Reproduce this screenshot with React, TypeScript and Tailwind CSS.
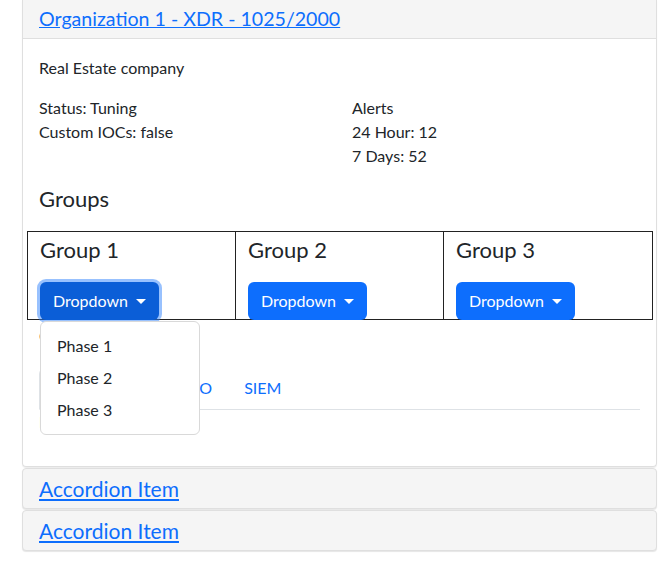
import React from "react";

const groups = ["Group 1", "Group 2", "Group 3"];

const Caret = () => (
  <span className="ml-[8px] inline-block h-0 w-0 border-x-[5px] border-t-[5px] border-x-transparent border-t-white" />
);

const App = () => {
  return (
    <div className="min-h-[587px] w-full bg-white font-['Lato',sans-serif] text-[#212529]">
      <div className="pl-[22px] pr-[12px]">
        {/* open item */}
        <div className="rounded-b-[4px] border border-t-0 border-[#dfdfdf] shadow-[0_1px_1px_rgba(0,0,0,0.08)]">
          <div className="flex h-[39px] items-center border-b border-[#dfdfdf] bg-[#f5f5f5] px-4">
            <a href="#" className="text-[19.6px] leading-6 text-[#0d6efd] underline">
              Organization 1 - XDR - 1025/2000
            </a>
          </div>
          <div className="p-4 pt-[17px] text-base leading-6">
            <p className="mb-4">Real Estate company</p>
            <div className="mb-4 grid grid-cols-[313px_1fr]">
              <div>
                <p>Status: Tuning</p>
                <p>Custom IOCs: false</p>
              </div>
              <div>
                <p>Alerts</p>
                <p>24 Hour: 12</p>
                <p>7 Days: 52</p>
              </div>
            </div>
            <h5 className="mb-[20px] pt-[3px] text-[22px] leading-6">Groups</h5>

            <div className="mx-[-12px] mr-[-13px] grid grid-cols-3 border border-[#222]">
              {groups.map((g, i) => (
                <div key={g} className={`px-3 pt-[6px] ${i < 2 ? "border-r border-[#222]" : ""}`}>
                  <h4 className="text-[22px] leading-6">{g}</h4>
                  <div className="relative mt-[20px] inline-block">
                    <button
                      className={
                        i === 0
                          ? "relative z-10 -mb-px flex h-[38px] items-center rounded-[6px] bg-[#0b5ed7] px-[13px] text-base text-white shadow-[0_0_0_3px_rgba(49,132,253,0.5)]"
                          : "-mb-px flex h-[38px] items-center rounded-[6px] bg-[#0d6efd] px-[13px] text-base text-white"
                      }
                    >
                      Dropdown
                      <Caret />
                    </button>
                    {i === 0 && (
                      <div className="absolute left-0 top-[calc(100%+2px)] z-20 w-[160px] rounded-[6px] border border-[#d9d9d9] bg-white py-2">
                        {["Phase 1", "Phase 2", "Phase 3"].map((p) => (
                          <div key={p} className="px-4 py-1 leading-6 text-[#212529]">
                            {p}
                          </div>
                        ))}
                      </div>
                    )}
                  </div>
                </div>
              ))}
            </div>

            <p className="mb-5 mt-[4px] text-[#a52834]">Onboard</p>
            <div className="mb-0 flex border-b border-[#dee2e6]">
              <span className="-mb-px w-[127px] rounded-t-[6px] border border-[#dee2e6] border-b-white bg-white px-4 py-2 text-[#495057]">
                EDR
              </span>
              <a href="#" className="px-4 py-2 text-[#0d6efd]">SSO</a>
              <a href="#" className="px-4 py-2 text-[#0d6efd]">SIEM</a>
            </div>
            <p className="mb-4 text-[#a52834]">Pending</p>
          </div>
        </div>

        {/* collapsed items */}
        {["Accordion Item", "Accordion Item"].map((t, i) => (
          <div
            key={i}
            className="mt-[1px] flex h-[41px] items-center rounded-[4px] border border-[#dfdfdf] bg-[#f5f5f5] px-4 shadow-[0_1px_1px_rgba(0,0,0,0.1)]"
          >
            <a href="#" className="text-[21px] leading-6 text-[#0d6efd] underline">
              {t}
            </a>
          </div>
        ))}
      </div>
    </div>
  );
};

export default App;
